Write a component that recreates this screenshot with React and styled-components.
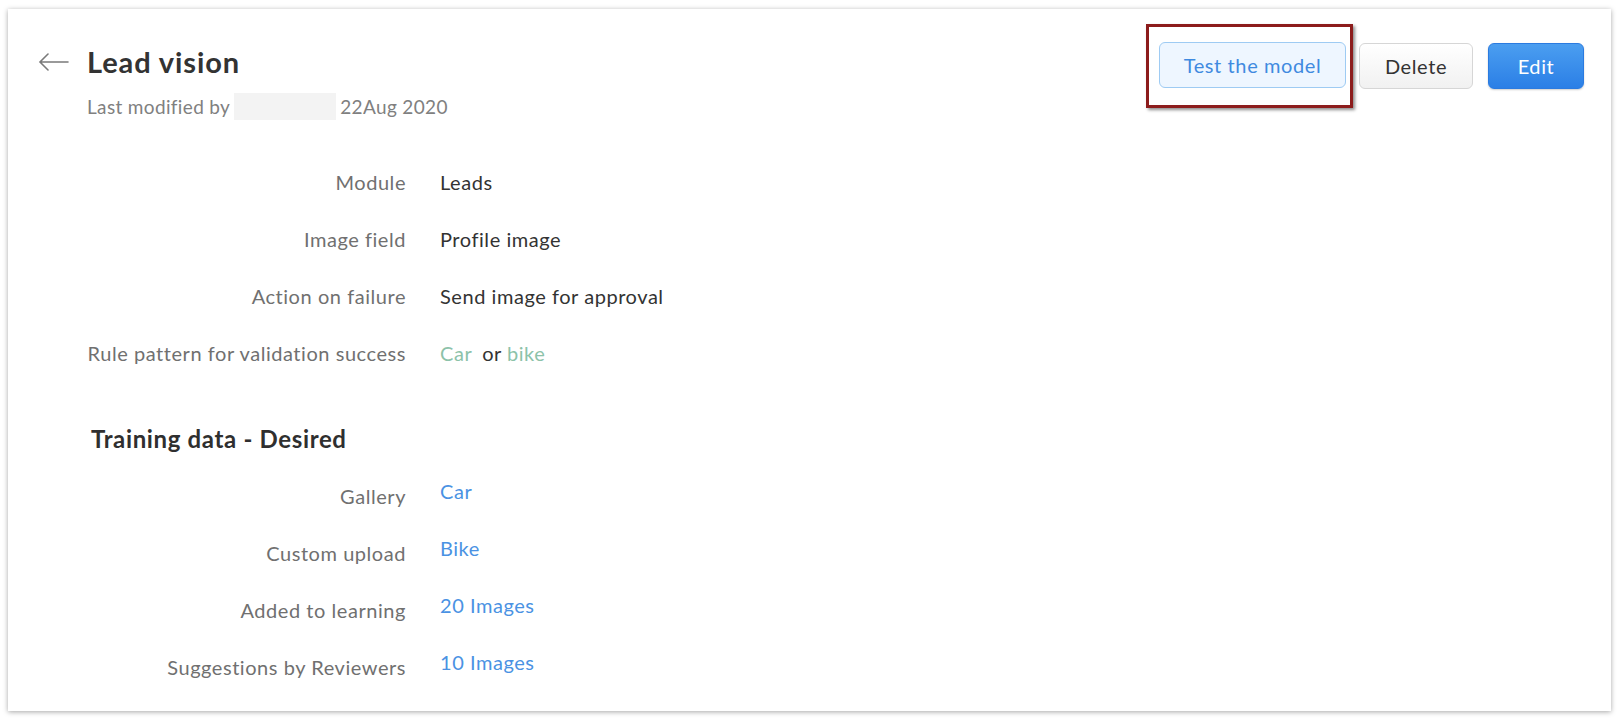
import React from 'react';
import styled, { createGlobalStyle } from 'styled-components';

/** global page reset */
const GlobalStyle = createGlobalStyle`
    html, body {
        margin: 0;
        padding: 0;
        background: #ffffff;
        font-family: Lato, "Open Sans", sans-serif;
    }
`

/** styled components */
const Page = styled.div`
    width: 1620px;
    height: 720px;
    padding: 9px 9px 9px 8px;
    box-sizing: border-box;
`
const Card = styled.div`
    height: 702px;
    box-sizing: border-box;
    background: #fff;
    box-shadow: 0 1px 5px rgba(0, 0, 0, 0.35);
    padding: 0 27px 0 30px;
    display: flex;
    flex-direction: column;
`
const Header = styled.div`
    display: flex;
    justify-content: space-between;
    align-items: flex-start;
`
const TitleBlock = styled.div`
    padding-top: 36px;
`
const TitleRow = styled.div`
    display: flex;
    align-items: center;
`
const BackArrow = styled.svg`
    width: 31px;
    height: 18px;
    margin-right: 18px;
    color: #7a7a7a;
`
const Title = styled.h1`
    margin: 0;
    font-size: 29px;
    line-height: 34px;
    letter-spacing: 0.9px;
    font-weight: 700;
    color: #333;
`
const Meta = styled.div`
    margin: 14px 0 0 49px;
    font-size: 19px;
    line-height: 24px;
    letter-spacing: 0.35px;
    color: #808080;
    display: flex;
    align-items: center;
`
const Redacted = styled.span`
    display: inline-block;
    width: 102px;
    height: 27px;
    margin: 0 4px;
    background: #f3f3f3;
`
const Actions = styled.div`
    display: flex;
    align-items: flex-start;
    padding-top: 15px;
`
const Highlight = styled.div`
    border: 3px solid #8c1c1c;
    padding: 15px 4px 17px 10px;
    box-shadow: 2px 2px 3px rgba(0, 0, 0, 0.45);
    margin-right: 6px;
`
const Button = styled.button`
    height: 46px;
    box-sizing: border-box;
    padding: 0;
    width: ${props => props.width}px;
    border-radius: 6px;
    font-family: Lato, "Open Sans", sans-serif;
    font-size: 20px;
    letter-spacing: 0.6px;
    cursor: pointer;
    ${props => props.variant === 'primary' && `
        background: linear-gradient(#4b9ef0, #2b7fe6);
        border: 1px solid #2b7be0;
        color: #fff;
        box-shadow: 0 1px 2px rgba(0, 0, 0, 0.2);
    `}
    ${props => props.variant === 'outline' && `
        background: #eef6ff;
        border: 1px solid #9ecbf3;
        color: #3f8ae0;
    `}
    ${props => props.variant === 'default' && `
        background: linear-gradient(#ffffff, #f1f1f1);
        border: 1px solid #d6d6d6;
        color: #333;
    `}
`
const Spacer = styled.span`
    display: inline-block;
    width: ${props => props.size}px;
`
const DetailList = styled.div`
    display: grid;
    grid-template-columns: 368px 1fr;
    grid-auto-rows: 57px;
    column-gap: 34px;
    margin-top: ${props => props.top}px;
`
const Label = styled.div`
    display: flex;
    align-items: center;
    justify-content: flex-end;
    font-size: 20px;
    letter-spacing: 0.55px;
    color: #707070;
`
const Value = styled.div`
    display: flex;
    align-items: center;
    font-size: 20px;
    letter-spacing: 0.55px;
    color: #333;
    padding-bottom: ${props => (props.raised ? 9 : 0)}px;
`
const Keyword = styled.span`
    color: #8cc2a9;
`
const Link = styled.span`
    color: #4a92e3;
`
const SectionTitle = styled.h2`
    margin: 43px 0 0 53px;
    font-size: 24px;
    line-height: 30px;
    letter-spacing: 0.65px;
    font-weight: 700;
    color: #2f2f2f;
`

const details = [
    { label: 'Module', value: 'Leads' },
    { label: 'Image field', value: 'Profile image' },
    { label: 'Action on failure', value: 'Send image for approval' },
    {
        label: 'Rule pattern for validation success',
        value: <><Keyword>Car</Keyword><Spacer size={10} />or<Spacer size={5} /><Keyword>bike</Keyword></>,
    },
]

const training = [
    { label: 'Gallery', value: 'Car' },
    { label: 'Custom upload', value: 'Bike' },
    { label: 'Added to learning', value: '20 Images' },
    { label: 'Suggestions by Reviewers', value: '10 Images' },
]

const App = () => {
    return (
        <Page>
            <GlobalStyle />
            <Card>
                <Header>
                    <TitleBlock>
                        <TitleRow>
                            <BackArrow viewBox="0 0 31 18" fill="none" stroke="currentColor" strokeWidth="1.6" strokeLinecap="round">
                                <path d="M30 9H2M10 1L2 9l8 8" />
                            </BackArrow>
                            <Title>Lead vision</Title>
                        </TitleRow>
                        <Meta>
                            Last modified by<Redacted />22Aug 2020
                        </Meta>
                    </TitleBlock>
                    <Actions>
                        <Highlight>
                            <Button variant="outline" width={187}>Test the model</Button>
                        </Highlight>
                        <Button variant="default" width={114} style={{ marginTop: 19 }}>Delete</Button>
                        <Spacer size={15} />
                        <Button variant="primary" width={96} style={{ marginTop: 19 }}>Edit</Button>
                    </Actions>
                </Header>

                <DetailList top={33}>
                    {details.map(d => (
                        <React.Fragment key={d.label}>
                            <Label>{d.label}</Label>
                            <Value>{d.value}</Value>
                        </React.Fragment>
                    ))}
                </DetailList>

                <SectionTitle>Training data - Desired</SectionTitle>

                <DetailList top={13}>
                    {training.map(d => (
                        <React.Fragment key={d.label}>
                            <Label>{d.label}</Label>
                            <Value raised><Link>{d.value}</Link></Value>
                        </React.Fragment>
                    ))}
                </DetailList>
            </Card>
        </Page>
    )
}

export default App;
